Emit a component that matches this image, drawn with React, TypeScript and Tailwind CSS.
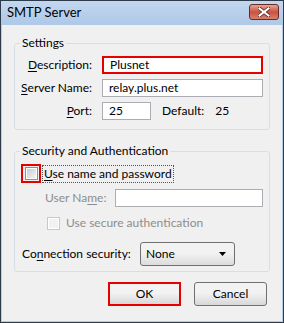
import type { ReactNode } from 'react'

const font = { fontFamily: 'Lato, "Liberation Sans", sans-serif' }

const Key = ({ children }: { children: ReactNode }) => <span className="underline underline-offset-2">{children}</span>

const Input = ({ value, className = '' }: { value?: string; className?: string }) => (
  <div className={`flex h-[18px] items-center border border-[#abadb3] bg-white px-[6px] text-[12px] leading-[14px] text-black ${className}`}>
    {value}
  </div>
)

const Checkbox = ({ disabled }: { disabled?: boolean }) => (
  <div
    className={`flex h-[13px] w-[13px] shrink-0 items-center justify-center border bg-white ${
      disabled ? 'border-[#c8c8c8]' : 'border-[#8e8f8f]'
    }`}
  >
    <div
      className={`h-[9px] w-[9px] ${
        disabled ? 'bg-[#f2f2f2]' : 'bg-gradient-to-br from-[#c8ccd2] to-[#f4f4f4]'
      }`}
    />
  </div>
)

const Group = ({ title, className = '', children }: { title: string; className?: string; children: ReactNode }) => (
  <fieldset className={`rounded-[3px] border border-[#d5dfe5] px-0 ${className}`}>
    <legend className="ml-[5px] px-[2px] text-[12px] leading-[14px] text-black">{title}</legend>
    {children}
  </fieldset>
)

const Button = ({ label, highlight }: { label: string; highlight?: boolean }) =>
  highlight ? (
    <div className="h-[24px] w-[73px] border-2 border-[#e60000]">
      <div className="flex h-full w-full items-center justify-center bg-gradient-to-b from-[#f2f2f2] from-45% to-[#d8d8d8] text-black">
        {label}
      </div>
    </div>
  ) : (
    <div className="flex h-[24px] w-[73px] items-center justify-center rounded-[3px] border border-[#707070] bg-gradient-to-b from-[#f2f2f2] from-45% to-[#d8d8d8] text-black">
      {label}
    </div>
  )

export default function App() {
  return (
    <div className="flex h-[323px] w-[284px] flex-col border border-[#2d3a4a] bg-[#b6cde8] whitespace-nowrap" style={font}>
      <div className="flex h-[24px] shrink-0 items-center justify-between bg-gradient-to-b from-[#c3d7ee] to-[#aec8e7] pl-[6px] pr-[4px]">
        <span className="text-[13px] text-black">SMTP Server</span>
        <div className="mb-[2px] flex h-[16px] w-[30px] items-center justify-center rounded-[3px] border border-[#6b2a2a] bg-gradient-to-b from-[#e6a595] via-[#c9523f] to-[#d8806a]">
          <svg width="12" height="10" viewBox="0 0 12 10">
            <path d="M1.5 1.5 L10.5 8.5 M10.5 1.5 L1.5 8.5" stroke="#5a2a2a" strokeWidth="3.6" strokeLinecap="square" />
            <path d="M1.5 1.5 L10.5 8.5 M10.5 1.5 L1.5 8.5" stroke="#ffffff" strokeWidth="2" strokeLinecap="square" />
          </svg>
        </div>
      </div>
      <div className="mx-[1px] mb-[1px] flex flex-1 flex-col bg-[#f0f0f0] px-[12px] pt-[11px] text-[12px] leading-[14px]">
        <Group title="Settings" className="h-[94px]">
          <div className="mt-[6px] flex flex-col gap-[5px]">
            <div className="flex items-center">
              <span className="w-[77px] text-right text-black">
                <Key>D</Key>escription:
              </span>
              <Input value="Plusnet" className="ml-[10px] mr-[6px] flex-1 border-2 border-[#e60000] px-[5px]" />
            </div>
            <div className="flex items-center">
              <span className="w-[77px] text-right text-black">
                <Key>S</Key>erver Name:
              </span>
              <Input value="relay.plus.net" className="ml-[10px] mr-[6px] flex-1" />
            </div>
            <div className="flex items-center text-black">
              <span className="w-[77px] text-right">
                <Key>P</Key>ort:
              </span>
              <Input value="25" className="ml-[10px] w-[49px]" />
              <span className="ml-[11px]">Default:</span>
              <span className="ml-[11px]">25</span>
            </div>
          </div>
        </Group>
        <Group title="Security and Authentication" className="mt-[14px] h-[128px]">
          <div className="mt-[6px] flex items-center">
            <div className="ml-[6px] flex h-[19px] w-[20px] items-center justify-center border-2 border-[#e60000]">
              <Checkbox />
            </div>
            <span className="ml-[1px] border border-dotted border-[#555] px-[1px] leading-[16px] text-black">
              <Key>U</Key>se name and password
            </span>
          </div>
          <div className="mt-[6px] flex items-center text-[#8d8d8d]">
            <span className="ml-[30px] w-[64px]">
              User Na<Key>m</Key>e:
            </span>
            <Input className="ml-[6px] mr-[6px] flex-1" />
          </div>
          <div className="mt-[9px] flex items-center text-[#8d8d8d]">
            <div className="ml-[32px]">
              <Checkbox disabled />
            </div>
            <span className="ml-[6px]">
              Use secure authent<Key>i</Key>cation
            </span>
          </div>
          <div className="mt-[12px] flex items-center text-black">
            <span className="ml-[7px] w-[112px]">
              Co<Key>n</Key>nection security:
            </span>
            <div className="ml-[6px] flex h-[24px] w-[95px] items-center justify-between rounded-[3px] border border-[#707070] bg-gradient-to-b from-[#f2f2f2] from-45% to-[#dcdcdc] pl-[5px] pr-[8px]">
              <span>None</span>
              <svg width="7" height="4" viewBox="0 0 7 4">
                <path d="M0 0 H7 L3.5 4 Z" fill="#000" />
              </svg>
            </div>
          </div>
        </Group>
        <div className="mt-[10px] flex justify-end gap-[13px] pr-[3px]">
          <Button label="OK" highlight />
          <Button label="Cancel" />
        </div>
      </div>
    </div>
  )
}
